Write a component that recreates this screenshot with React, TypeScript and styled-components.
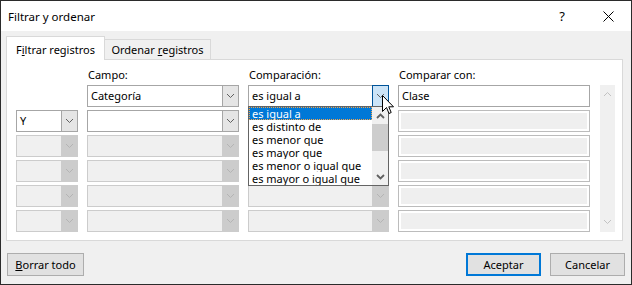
import React from "react";
import styled, { createGlobalStyle } from "styled-components";

const FONT = `"Noto Sans", "Segoe UI", sans-serif`;

const GlobalStyle = createGlobalStyle`
  html, body {
    margin: 0;
    padding: 0;
    background: #ffffff;
  }
  body {
    font-family: ${FONT};
    font-size: 11px;
    color: #000000;
  }
  * {
    box-sizing: border-box;
  }
`;

const Window = styled.div`
  width: 632px;
  height: 285px;
  border: 1px solid #2b2b2b;
  background: #f0f0f0;
  display: flex;
  flex-direction: column;
`;

const TitleBar = styled.div`
  height: 30px;
  flex-shrink: 0;
  background: #ffffff;
  display: flex;
  align-items: center;
  padding-left: 7px;
`;

const Title = styled.div`
  flex: 1;
  font-size: 11.5px;
`;

const CaptionButton = styled.div`
  width: 46px;
  height: 30px;
  display: flex;
  align-items: center;
  justify-content: center;
  font-size: 13px;
`;

const Content = styled.div`
  padding: 5px 8px 0 5px;
`;

const TabStrip = styled.div`
  height: 23px;
  display: flex;
  align-items: flex-end;
`;

const Tab = styled.div<{ $active?: boolean; $width: number }>`
  width: ${(p) => p.$width}px;
  height: ${(p) => (p.$active ? 24 : 20)}px;
  margin-bottom: ${(p) => (p.$active ? -1 : 0)}px;
  position: relative;
  z-index: ${(p) => (p.$active ? 1 : 0)};
  background: ${(p) => (p.$active ? "#ffffff" : "#f0f0f0")};
  border: 1px solid #d9d9d9;
  border-bottom: none;
  border-left: ${(p) => (p.$active ? "1px solid #d9d9d9" : "none")};
  display: flex;
  align-items: center;
  justify-content: center;
  padding-top: ${(p) => (p.$active ? 1 : 0)}px;
  white-space: nowrap;
`;

const Panel = styled.div`
  width: 617px;
  height: 182px;
  background: #ffffff;
  border: 1px solid #d9d9d9;
`;

const FieldGrid = styled.div`
  display: grid;
  grid-template-columns: 62px 152px 141px 192px 16px;
  grid-template-rows: 17px repeat(6, 22px);
  column-gap: 9px;
  row-gap: 3px;
  padding: 5px 0 0 9px;
`;

const ColumnLabel = styled.div`
  align-self: end;
  padding-left: 1px;
  line-height: 15px;
  white-space: nowrap;
`;

const ComboCell = styled.div`
  position: relative;
`;

const ComboBox = styled.div<{ $disabled?: boolean }>`
  height: 22px;
  display: flex;
  border: 1px solid ${(p) => (p.$disabled ? "#cccccc" : "#a6a6a6")};
  background: ${(p) => (p.$disabled ? "#f0f0f0" : "#ffffff")};
`;

const ComboText = styled.div`
  flex: 1;
  padding-left: 3px;
  line-height: 20px;
  white-space: nowrap;
  overflow: hidden;
`;

const ComboButton = styled.div<{ $disabled?: boolean; $hot?: boolean }>`
  width: 17px;
  margin: -1px -1px -1px 0;
  display: flex;
  align-items: center;
  justify-content: center;
  border: 1px solid
    ${(p) => (p.$hot ? "#005499" : p.$disabled ? "#cccccc" : "#a6a6a6")};
  background: ${(p) => (p.$hot ? "#cce4f7" : p.$disabled ? "#cccccc" : "#e5e5e5")};
`;

const TextBox = styled.div<{ $disabled?: boolean }>`
  height: 22px;
  border: 1px solid ${(p) => (p.$disabled ? "#bcbcbc" : "#a6a6a6")};
  background: ${(p) => (p.$disabled ? "#efefef" : "#ffffff")};
  box-shadow: ${(p) => (p.$disabled ? "inset 0 0 0 2px #ffffff" : "none")};
  padding-left: 3px;
  line-height: 20px;
`;

const Scrollbar = styled.div`
  grid-column: 5;
  grid-row: 2 / span 6;
  margin-left: 1px;
  background: #f0f0f0;
  display: flex;
  flex-direction: column;
  justify-content: space-between;
  align-items: center;
  padding: 6px 0 7px;
`;

const DropList = styled.div`
  position: absolute;
  left: 0;
  right: 0;
  top: 21px;
  height: 80px;
  z-index: 2;
  display: flex;
  background: #ffffff;
  border: 1px solid #646464;
`;

const ItemList = styled.div`
  flex: 1;
  display: flex;
  flex-direction: column;
`;

const DropItem = styled.div<{ $selected?: boolean }>`
  height: 13px;
  line-height: 13px;
  padding-left: 3px;
  white-space: nowrap;
  overflow: hidden;
  color: ${(p) => (p.$selected ? "#ffffff" : "#000000")};
  background: ${(p) => (p.$selected ? "#0078d7" : "transparent")};
  outline: ${(p) => (p.$selected ? "1px dotted #f7a448" : "none")};
  outline-offset: -1px;
`;

const ListScroll = styled.div`
  width: 16px;
  background: #f0f0f0;
  display: flex;
  flex-direction: column;
  align-items: center;
`;

const ScrollArrow = styled.div`
  height: 17px;
  width: 16px;
  display: flex;
  align-items: center;
  justify-content: center;
`;

const Thumb = styled.div`
  width: 16px;
  height: 27px;
  background: #cdcdcd;
`;

const Track = styled.div`
  flex: 1;
`;

const Cursor = styled.svg`
  position: absolute;
  left: 134px;
  top: 10px;
  z-index: 3;
`;

const Footer = styled.div`
  display: flex;
  justify-content: space-between;
  padding: 12px 6px 0 6px;
`;

const ButtonGroup = styled.div`
  display: flex;
  gap: 9px;
`;

const Button = styled.div<{ $primary?: boolean; $width: number }>`
  width: ${(p) => p.$width}px;
  height: 23px;
  background: #e1e1e1;
  border: ${(p) => (p.$primary ? "2px solid #0078d7" : "1px solid #adadad")};
  display: flex;
  align-items: center;
  justify-content: center;
  white-space: nowrap;
`;

const Chevron: React.FC<{ color: string; up?: boolean; bold?: boolean }> = ({
  color,
  up,
  bold
}) => (
  <svg width="9" height="6" viewBox="0 0 9 6">
    <polyline
      points={up ? "1,5 4.5,1.5 8,5" : "1,1 4.5,4.5 8,1"}
      fill="none"
      stroke={color}
      strokeWidth={bold ? 1.8 : 1}
    />
  </svg>
);

type ComboProps = {
  value?: string;
  disabled?: boolean;
  hot?: boolean;
};

const Combo: React.FC<ComboProps> = ({ value, disabled, hot }) => (
  <ComboBox $disabled={disabled}>
    <ComboText>{value}</ComboText>
    <ComboButton $disabled={disabled} $hot={hot}>
      <Chevron color={disabled ? "#b4b4b4" : "#606060"} />
    </ComboButton>
  </ComboBox>
);

const options = [
  "es igual a",
  "es distinto de",
  "es menor que",
  "es mayor que",
  "es menor o igual que",
  "es mayor o igual que"
];

const App: React.FC = () => {
  const emptyRows = [2, 3, 4, 5];

  return (
    <>
      <GlobalStyle />
      <Window>
        <TitleBar>
          <Title>Filtrar y ordenar</Title>
          <CaptionButton>?</CaptionButton>
          <CaptionButton>
            <svg width="11" height="11" viewBox="0 0 11 11">
              <path d="M0.5,0.5 L10.5,10.5 M10.5,0.5 L0.5,10.5" stroke="#000" strokeWidth="1" />
            </svg>
          </CaptionButton>
        </TitleBar>

        <Content>
          <TabStrip>
            <Tab $active $width={99}>
              F<u>i</u>ltrar registros
            </Tab>
            <Tab $width={106}>
              Ordenar&nbsp;<u>r</u>egistros
            </Tab>
          </TabStrip>
          <Panel>
            <FieldGrid>
              <div />
              <ColumnLabel>Campo:</ColumnLabel>
              <ColumnLabel>Comparación:</ColumnLabel>
              <ColumnLabel>Comparar con:</ColumnLabel>
              <div />

              <div />
              <Combo value="Categoría" />
              <ComboCell>
                <Combo value="es igual a" hot />
                <DropList>
                  <ItemList>
                    {options.map((o, i) => (
                      <DropItem key={o} $selected={i === 0}>
                        {o}
                      </DropItem>
                    ))}
                  </ItemList>
                  <ListScroll>
                    <ScrollArrow>
                      <Chevron color="#606060" up bold />
                    </ScrollArrow>
                    <Thumb />
                    <Track />
                    <ScrollArrow>
                      <Chevron color="#606060" bold />
                    </ScrollArrow>
                  </ListScroll>
                </DropList>
                <Cursor width="13" height="20" viewBox="0 0 13 20">
                  <path
                    d="M0.5,0.5 L0.5,16.5 L4.5,12.5 L7,18.5 L9.2,17.5 L6.8,11.8 L11.5,11.8 Z"
                    fill="#ffffff"
                    stroke="#000000"
                    strokeWidth="1"
                  />
                </Cursor>
              </ComboCell>
              <TextBox>Clase</TextBox>
              <Scrollbar>
                <Chevron color="#c2c2c2" up />
                <Chevron color="#c2c2c2" />
              </Scrollbar>

              <Combo value="Y" />
              <Combo />
              <Combo disabled />
              <TextBox $disabled />

              {emptyRows.map((r) => (
                <React.Fragment key={r}>
                  <Combo disabled />
                  <Combo disabled />
                  <Combo disabled />
                  <TextBox $disabled />
                </React.Fragment>
              ))}
            </FieldGrid>
          </Panel>
        </Content>

        <Footer>
          <Button $width={77}>
            <u>B</u>orrar todo
          </Button>
          <ButtonGroup>
            <Button $primary $width={75}>
              Aceptar
            </Button>
            <Button $width={75}>Cancelar</Button>
          </ButtonGroup>
        </Footer>
      </Window>
    </>
  );
};

export default App;
